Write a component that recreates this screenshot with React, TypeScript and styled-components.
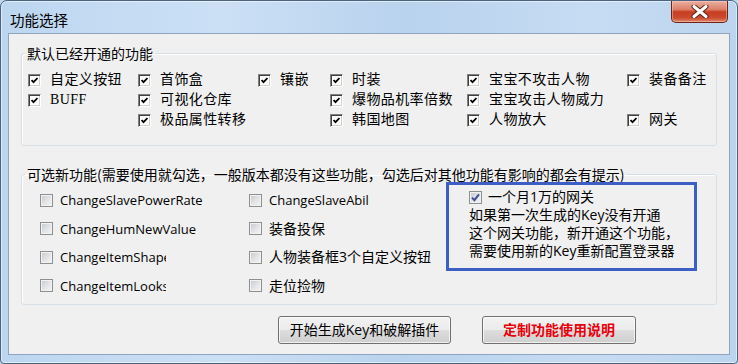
import React from 'react';
import styled, { createGlobalStyle } from 'styled-components';

const CJK = `'Noto Sans CJK SC', sans-serif`;
const UI = `'Open Sans', 'Noto Sans CJK SC', sans-serif`;

const GlobalStyle = createGlobalStyle`
  html, body {
    margin: 0;
    padding: 0;
    overflow: hidden;
    background: #bfd5ec;
  }
  body {
    font-family: ${CJK};
  }
`;

const Window = styled.div`
  box-sizing: border-box;
  width: 738px;
  height: 364px;
  display: flex;
  flex-direction: column;
  border: 1px solid #4a6383;
  border-radius: 7px 7px 4px 4px;
  background: linear-gradient(90deg, #bdd6f0 0%, #cbe0f5 30%, #b9d2ed 55%, #c6dcf3 80%, #bcd4ee 100%);
  box-shadow: inset 0 0 0 1px rgba(255, 255, 255, 0.55);
  overflow: hidden;
`;

const TitleBar = styled.div`
  height: 32px;
  flex: none;
  display: flex;
  justify-content: space-between;
  align-items: flex-start;
`;

const Title = styled.div`
  margin: 10px 0 0 9px;
  font: 14.5px/18px ${CJK};
  color: #000;
`;

const CloseButton = styled.div`
  box-sizing: border-box;
  width: 57px;
  height: 22px;
  margin-right: 9px;
  display: flex;
  align-items: center;
  justify-content: center;
  border: 1px solid #6a2418;
  border-top: none;
  border-radius: 0 0 5px 5px;
  background: linear-gradient(180deg, #eab0a2 0%, #dc8068 40%, #c63e22 52%, #cb4a2e 80%, #e08a6c 100%);
  box-shadow: inset 0 0 0 1px rgba(255, 210, 200, 0.45);
`;

const Client = styled.div`
  flex: 1;
  margin: 0 7px 8px 7px;
  padding: 0 12px;
  display: flex;
  flex-direction: column;
  border: 1px solid #8ea4bf;
  background: #f0f0f0;
`;

const Group = styled.fieldset<{ $gap: number }>`
  margin: ${(p) => p.$gap}px 0 0 0;
  padding: 0;
  min-width: 0;
  border: 1px solid #d5dfe5;
  border-radius: 3px;
  box-shadow: inset 1px 1px 0 #fff;
`;

const Legend = styled.legend`
  margin-left: 3px;
  padding: 0 2px;
  font: 14px/16px ${CJK};
  color: #000;
`;

const DefaultGrid = styled.div`
  display: grid;
  grid-template-columns: 110px 120px 72px 137px 160px 1fr;
  grid-auto-rows: 20px;
  padding: 9px 0 15px 6px;
`;

const ClassicItem = styled.div`
  display: flex;
  align-items: center;
  gap: 9px;
  font: 14px/20px 'Liberation Serif', 'Noto Sans CJK SC', serif;
  letter-spacing: 0.4px;
  color: #000;
  white-space: nowrap;
`;

const ClassicBox = styled.span`
  box-sizing: border-box;
  width: 13px;
  height: 13px;
  flex: none;
  display: flex;
  align-items: center;
  justify-content: center;
  border: 1px solid;
  border-color: #808080 #fff #fff #808080;
  box-shadow: inset 1px 1px 0 #404040, inset -1px -1px 0 #d4d0c8;
  background: #fff;
`;

const OptionalBody = styled.div`
  height: 122px;
  display: flex;
  padding-left: 18px;
`;

const OptionColumn = styled.div<{ $width: number }>`
  width: ${(p) => p.$width}px;
  flex: none;
  display: flex;
  flex-direction: column;
  padding-top: 4px;
`;

const OptionRow = styled.div`
  height: 28.5px;
  display: flex;
  align-items: center;
  gap: 7px;
`;

const ModernBox = styled.span`
  box-sizing: border-box;
  width: 13px;
  height: 13px;
  flex: none;
  display: flex;
  align-items: center;
  justify-content: center;
  border: 1px solid #8e8f8f;
  background: linear-gradient(135deg, #c4c8ce 0%, #e4e5e7 55%, #f4f4f4 100%);
  box-shadow: inset 0 0 0 1px #f2f2f2;
`;

const OptionLabel = styled.span<{ $latin?: boolean; $clip?: number }>`
  font: ${(p) => (p.$latin ? 13 : 14)}px/18px ${UI};
  color: #000;
  white-space: nowrap;
  overflow: hidden;
  max-width: ${(p) => (p.$clip ? `${p.$clip}px` : 'none')};
`;

const Notice = styled.div`
  box-sizing: border-box;
  width: 251px;
  height: 89px;
  flex: none;
  padding: 3px 0 0 20px;
  border: 3px solid #3d5ec4;
  font: 14px/18px ${UI};
  color: #000;
`;

const NoticeHead = styled.div`
  display: flex;
  align-items: center;
  gap: 6px;
`;

const ButtonRow = styled.div`
  display: flex;
  justify-content: flex-end;
  gap: 31px;
  margin-top: 11px;
  padding-right: 81px;
`;

const Button = styled.button<{ $width: number; $accent?: boolean }>`
  box-sizing: border-box;
  width: ${(p) => p.$width}px;
  height: 28px;
  padding: 0;
  border: 1px solid #707070;
  border-radius: 3px;
  background: linear-gradient(180deg, #f2f2f2 0%, #ebebeb 48%, #dddddd 52%, #cfcfcf 100%);
  box-shadow: inset 0 0 0 1px rgba(255, 255, 255, 0.7);
  font: ${(p) => (p.$accent ? 700 : 400)} 14px/26px ${UI};
  color: ${(p) => (p.$accent ? '#e8000b' : '#000')};
`;

const ClassicCheck = () => (
  <svg width="7" height="7" viewBox="0 0 7 7">
    <polyline points="0.5,3 2.5,5.2 6.5,1" fill="none" stroke="#000" strokeWidth="1.8" />
  </svg>
);

const BlueCheck = () => (
  <svg width="9" height="9" viewBox="0 0 9 9">
    <polyline points="1,4.6 3.4,7.2 8,1.4" fill="none" stroke="#3c4d93" strokeWidth="1.9" />
  </svg>
);

const CloseGlyph = () => (
  <svg width="18" height="13" viewBox="0 0 18 13">
    <path d="M3 1.5 L15 11.5 M15 1.5 L3 11.5" stroke="#5a2218" strokeWidth="5" strokeLinecap="round" />
    <path d="M3 1.5 L15 11.5 M15 1.5 L3 11.5" stroke="#fff" strokeWidth="3" strokeLinecap="round" />
  </svg>
);

const defaultFeatures: (string | null)[] = [
  '自定义按钮', '首饰盒', '镶嵌', '时装', '宝宝不攻击人物', '装备备注',
  'BUFF', '可视化仓库', null, '爆物品机率倍数', '宝宝攻击人物威力', null,
  null, '极品属性转移', null, '韩国地图', '人物放大', '网关',
];

interface Option {
  label: string;
  latin?: boolean;
  clip?: number;
}

// the original dialog cuts some labels short, so keep their clip widths
const optionColumns: { width: number; items: Option[] }[] = [
  {
    width: 209,
    items: [
      { label: 'ChangeSlavePowerRate', latin: true },
      { label: 'ChangeHumNewValue', latin: true },
      { label: 'ChangeItemShape', latin: true, clip: 106 },
      { label: 'ChangeItemLooks', latin: true, clip: 106 },
    ],
  },
  {
    width: 197,
    items: [
      { label: 'ChangeSlaveAbility', latin: true, clip: 100 },
      { label: '装备投保' },
      { label: '人物装备框3个自定义按钮' },
      { label: '走位捡物' },
    ],
  },
];

const App: React.FC = () => {
  return (
    <>
      <GlobalStyle />
      <Window>
        <TitleBar>
          <Title>功能选择</Title>
          <CloseButton>
            <CloseGlyph />
          </CloseButton>
        </TitleBar>
        <Client>
          <Group $gap={11}>
            <Legend>默认已经开通的功能</Legend>
            <DefaultGrid>
              {defaultFeatures.map((name, i) =>
                name ? (
                  <ClassicItem key={i}>
                    <ClassicBox>
                      <ClassicCheck />
                    </ClassicBox>
                    {name}
                  </ClassicItem>
                ) : (
                  <span key={i} />
                )
              )}
            </DefaultGrid>
          </Group>

          <Group $gap={20}>
            <Legend>可选新功能(需要使用就勾选，一般版本都没有这些功能，勾选后对其他功能有影响的都会有提示)</Legend>
            <OptionalBody>
              {optionColumns.map((col, c) => (
                <OptionColumn key={c} $width={col.width}>
                  {col.items.map((opt) => (
                    <OptionRow key={opt.label}>
                      <ModernBox />
                      <OptionLabel $latin={opt.latin} $clip={opt.clip}>
                        {opt.label}
                      </OptionLabel>
                    </OptionRow>
                  ))}
                </OptionColumn>
              ))}
              <Notice>
                <NoticeHead>
                  <ModernBox>
                    <BlueCheck />
                  </ModernBox>
                  一个月1万的网关
                </NoticeHead>
                <div>如果第一次生成的Key没有开通</div>
                <div>这个网关功能，新开通这个功能，</div>
                <div>需要使用新的Key重新配置登录器</div>
              </Notice>
            </OptionalBody>
          </Group>

          <ButtonRow>
            <Button $width={173}>开始生成Key和破解插件</Button>
            <Button $width={154} $accent>定制功能使用说明</Button>
          </ButtonRow>
        </Client>
      </Window>
    </>
  );
};

export default App;
